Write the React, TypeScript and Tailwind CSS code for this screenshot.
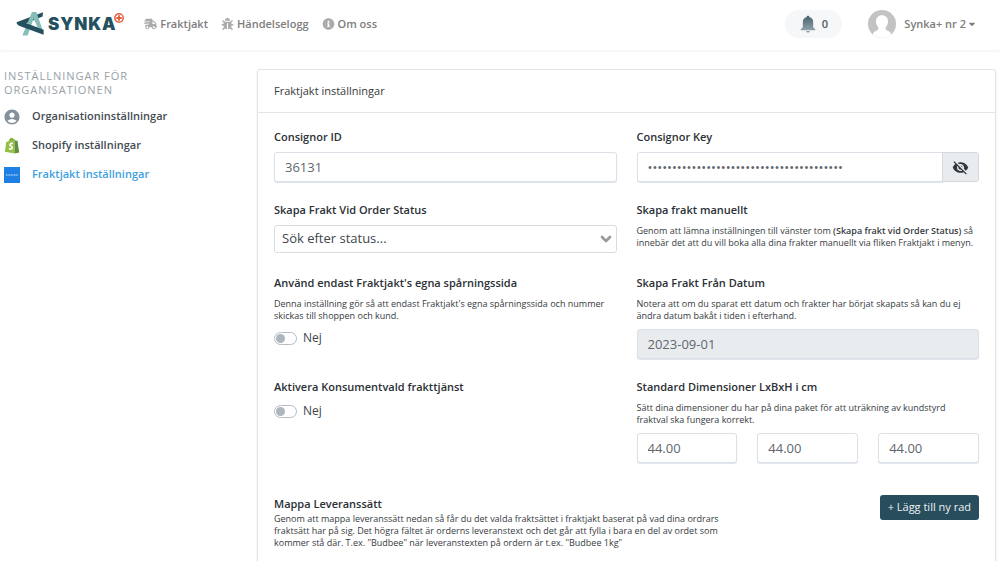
import { useState } from 'react'
import type { ReactNode } from 'react'
import { FaBug, FaCaretDown, FaInfoCircle, FaShippingFast } from 'react-icons/fa'
import { MdAccountCircle, MdVisibilityOff } from 'react-icons/md'
import { ChevronDown } from 'lucide-react'
import { clsx } from 'clsx'

const navItems = [
  { title: 'Fraktjakt', href: '#fraktjakt', icon: FaShippingFast },
  { title: 'Händelselogg', href: '#logg', icon: FaBug },
  { title: 'Om oss', href: '#om-oss', icon: FaInfoCircle }
]

const inputClass =
  'h-[30px] w-full min-w-0 rounded-[3px] border border-[#dce1e8] bg-white px-2.5 text-[13px] text-[#5f666d] shadow-[0_1px_1px_#dfe4ea] outline-none'

function LogoMark() {
  return (
    <svg viewBox="0 0 28 26" className="h-[26px] w-7" aria-hidden="true">
      <path d="M27 1.200 1.200 11c-.8.400-.8 1.500 0 2l3.400 1.600L26.600 5.600z" fill="#25505f" />
      <path d="M16 1h4.400L26.400 18.600l-4.400-1.200L17.600 7.400 11.600 24.600H6.400z" fill="#86bdb9" />
      <path d="M.900 12.800 9 11.800 27.600 18.800V23.800L3 14.800z" fill="#25505f" />
    </svg>
  )
}

function PlusBadge() {
  return (
    <svg viewBox="0 0 10 10" className="h-2.5 w-2.5" aria-hidden="true">
      <circle cx="5" cy="5" r="4.200" fill="#fff" stroke="#e0603f" strokeWidth="1.500" />
      <path d="M5 2.200v5.600M2.200 5h5.600" stroke="#e0603f" strokeWidth="1.900" />
    </svg>
  )
}

function BellIcon() {
  return (
    <svg viewBox="0 0 16 18" className="h-[18px] w-4" aria-hidden="true">
      <defs>
        <linearGradient id="bell" x1="0" y1="0" x2="0" y2="1">
          <stop offset="0" stopColor="#48616d" />
          <stop offset="1" stopColor="#8fa1aa" />
        </linearGradient>
      </defs>
      <path
        d="M8 .8c.8 0 1.300.5 1.300 1.300 2.500.6 3.900 2.500 3.900 5v5.200l2.100 2v.9H.7v-.9l2.100-2V7.100c0-2.500 1.400-4.400 3.900-5C6.700 1.300 7.200.8 8 .8z"
        fill="url(#bell)"
      />
      <path d="M6.200 15.900h3.600c-.1 1-.8 1.600-1.800 1.600s-1.700-.6-1.800-1.600z" fill="#8fa1aa" />
    </svg>
  )
}

function ShopifyIcon() {
  return (
    <svg viewBox="0 0 16 18" className="h-[17px] w-4" aria-hidden="true">
      <path d="M1.900 5.200 4.400 4.400C4.900 2.300 6.300.7 8 .7c.8 0 1.300.5 1.600 1.200l1.200.4.200 15.200L.4 15.700z" fill="#95bf47" />
      <path d="M10.800 2.600 12 3.900l1.800.2L15.600 16.500 11 17.500z" fill="#5e8e3e" />
      <path d="M5.600 4c.5-1.300 1.300-2.200 2.200-2.200.5 0 .7.6.8 1.400" fill="none" stroke="#5e8e3e" strokeWidth=".7" />
      <path
        d="M8.900 7.100c-1.500-.8-3.100-.3-3.100 1 0 1.600 2.500 1.700 2.500 3.400 0 1.400-1.900 1.800-3.500.6"
        fill="none"
        stroke="#fff"
        strokeWidth="1.700"
      />
    </svg>
  )
}

function FraktjaktIcon() {
  return (
    <svg viewBox="0 0 16 16" className="h-4 w-4" aria-hidden="true">
      <path d="M0 0h16v16H0z" fill="#1f7fe5" />
      <path d="M2 8h12" stroke="#9cc8f6" strokeWidth="1.400" strokeDasharray="1.100 .5" />
    </svg>
  )
}

function Avatar() {
  return (
    <svg viewBox="0 0 28 28" className="h-7 w-7" aria-hidden="true">
      <defs>
        <clipPath id="avatar">
          <circle cx="14" cy="14" r="14" />
        </clipPath>
      </defs>
      <g clipPath="url(#avatar)">
        <path d="M0 0h28v28H0z" fill="#c3c3c3" />
        <path
          d="M14 5.200c3.600 0 6 2.500 6 6 0 2.500-.9 4.600-2.300 5.900v1.600c0 .9.700 1.500 2 2 2.400.9 4 2.600 4.300 7.300H4c.3-4.700 1.900-6.400 4.300-7.300 1.300-.5 2-1.100 2-2v-1.600C8.900 15.800 8 13.700 8 11.200c0-3.500 2.400-6 6-6z"
          fill="#fff"
        />
      </g>
    </svg>
  )
}

const sideItems = [
  { title: 'Organisationinställningar', href: '#organisation', icon: <MdAccountCircle className="h-[18px] w-[18px] shrink-0 text-[#84919b]" /> },
  { title: 'Shopify inställningar', href: '#shopify', icon: <ShopifyIcon /> },
  { title: 'Fraktjakt inställningar', href: '#fraktjakt-installningar', icon: <FraktjaktIcon />, active: true }
]

function Label({ htmlFor, children }: { htmlFor?: string; children: ReactNode }) {
  const className = 'mb-1.5 block text-[11px] leading-[18px] font-semibold text-[#2b3035]'
  if (!htmlFor) return <h3 className={className}>{children}</h3>
  return <label htmlFor={htmlFor} className={className}>{children}</label>
}

function Help({ children }: { children: ReactNode }) {
  return <p className="pr-1 text-[9px] leading-3 text-[#363b40]">{children}</p>
}

function Toggle({ id }: { id: string }) {
  const [on, setOn] = useState(false)
  return (
    <div className="flex h-[18px] items-center gap-1.5">
      <span className="relative flex">
        <input
          id={id}
          type="checkbox"
          role="switch"
          checked={on}
          onChange={(e) => setOn(e.target.checked)}
          className="peer h-[13px] w-[23px] appearance-none rounded-full border border-[#b4bcc5] bg-white checked:bg-[#25505f]"
        />
        <span className="pointer-events-none absolute top-0.5 left-0.5 h-[9px] w-[9px] rounded-full bg-[#adb5bd] peer-checked:left-3" />
      </span>
      <span className="text-xs text-[#40464b]">{on ? 'Ja' : 'Nej'}</span>
    </div>
  )
}

function Navbar() {
  return (
    <header className="flex h-[51px] items-center justify-between border-b border-[#f4f4f4] bg-white pr-6 pb-0.5 pl-4 shadow-[0_1px_2px_#f8f8f8]">
      <div className="flex items-center">
        <a href="#start" className="flex items-center" aria-label="Synka+">
          <LogoMark />
          <span className="ml-1 font-[Inter,sans-serif] text-[17px] leading-6 font-black tracking-wider text-[#25505f]">SYNKA</span>
          <span className="-mt-3 -ml-0.5">
            <PlusBadge />
          </span>
        </a>
        <nav className="ml-5 flex gap-[13px]">
          {navItems.map((item) => {
            const Icon = item.icon
            return (
              <a key={item.href} href={item.href} className="flex items-center gap-[3px] text-[11px] font-semibold text-[#7d7d7d]">
                <Icon className="h-3 w-[13px] text-[#ababab]" />
                {item.title}
              </a>
            )
          })}
        </nav>
      </div>
      <div className="flex items-center gap-[26px]">
        <button type="button" className="flex h-7 w-[57px] items-center justify-center gap-1.5 rounded-full bg-[#f6f7f8] text-[11px] font-semibold text-[#4c5a63]">
          <BellIcon />0
        </button>
        <button type="button" className="flex items-center gap-2 text-[11px] font-semibold text-[#7d7d7d]">
          <Avatar />
          <span className="flex items-center gap-0.5">
            Synka+ nr 2
            <FaCaretDown className="h-2.5 w-2" />
          </span>
        </button>
      </div>
    </header>
  )
}

function Sidebar() {
  return (
    <aside className="w-[25%] shrink-0 pl-1">
      <h2 className="w-40 text-[11px] leading-[14px] tracking-[1px] text-[#98a1a8] uppercase">
        Inställningar för organisationen
      </h2>
      <nav className="mt-[5px]">
        {sideItems.map((item) => (
          <a
            key={item.href}
            href={item.href}
            className={clsx(
              'flex h-[29px] items-center gap-3 text-[11px] font-semibold',
              item.active ? 'text-[#3f9fde]' : 'text-[#434b52]'
            )}
          >
            <span className="flex w-4 justify-center">{item.icon}</span>
            {item.title}
          </a>
        ))}
      </nav>
    </aside>
  )
}

export default function App() {
  const [showKey, setShowKey] = useState(false)

  return (
    <div className="min-h-screen bg-white font-['Open_Sans',sans-serif]">
      <Navbar />
      <div className="flex items-start pt-[18px] pr-1">
        <Sidebar />
        <main className="ml-2 min-w-0 flex-1 rounded-[3px] border border-[#e4e4e4] shadow-[0_1px_3px_#ececec]">
          <h1 className="border-b border-[#e4e4e4] px-4 text-[11px] leading-[42px] text-[#363b40]">Fraktjakt inställningar</h1>
          <form className="px-4 pt-[15px] pb-8">
            <div className="grid grid-cols-2 gap-x-5 gap-y-[19px]">
              <div>
                <Label htmlFor="consignor-id">Consignor ID</Label>
                <input id="consignor-id" defaultValue="36131" className={inputClass} />
              </div>

              <div>
                <Label htmlFor="consignor-key">Consignor Key</Label>
                <div className="flex">
                  <input
                    id="consignor-key"
                    type={showKey ? 'text' : 'password'}
                    defaultValue="0123456789012345678901234567890123456789"
                    className={clsx(inputClass, 'rounded-r-none')}
                  />
                  <button
                    type="button"
                    aria-label="Visa nyckel"
                    onClick={() => setShowKey(!showKey)}
                    className="-ml-px flex h-[30px] w-[37px] shrink-0 items-center justify-center rounded-r-[3px] border border-[#d3d9df] bg-[#e9ecef] text-[#32373c]"
                  >
                    <MdVisibilityOff className="h-[17px] w-[17px]" />
                  </button>
                </div>
              </div>

              <div>
                <Label htmlFor="order-status">Skapa Frakt Vid Order Status</Label>
                <div className="relative mb-0.5">
                  <select
                    id="order-status"
                    className="block h-7 w-full appearance-none rounded-[3px] border border-[#d9dce0] bg-white px-[7px] text-[13px] text-[#40464b] outline-none"
                  >
                    <option>Sök efter status...</option>
                  </select>
                  <ChevronDown className="pointer-events-none absolute top-1.5 right-[3px] h-4 w-4 text-[#999]" strokeWidth={4} />
                </div>
              </div>

              <div>
                <Label>Skapa frakt manuellt</Label>
                <Help>
                  Genom att lämna inställningen till vänster tom{' '}
                  <strong className="font-semibold">(Skapa frakt vid Order Status)</strong> så innebär det att du vill
                  boka alla dina frakter manuellt via fliken Fraktjakt i menyn.
                </Help>
              </div>

              <div>
                <Label htmlFor="tracking">Använd endast Fraktjakt's egna spårningssida</Label>
                <Help>
                  Denna inställning gör så att endast Fraktjakt's egna spårningssida och nummer skickas till shoppen och
                  kund.
                </Help>
                <div className="mt-[7px]">
                  <Toggle id="tracking" />
                </div>
              </div>

              <div>
                <Label htmlFor="from-date">Skapa Frakt Från Datum</Label>
                <Help>
                  Notera att om du sparat ett datum och frakter har börjat skapats så kan du ej ändra datum bakåt i
                  tiden i efterhand.
                </Help>
                <input
                  id="from-date"
                  defaultValue="2023-09-01"
                  disabled
                  className={clsx(inputClass, 'mt-[7px] disabled:bg-[#e9ecef]')}
                />
              </div>

              <div>
                <Label htmlFor="consumer">Aktivera Konsumentvald frakttjänst</Label>
                <Toggle id="consumer" />
              </div>

              <div>
                <Label htmlFor="dim-l">Standard Dimensioner LxBxH i cm</Label>
                <Help>
                  Sätt dina dimensioner du har på dina paket för att uträkning av kundstyrd fraktval ska fungera
                  korrekt.
                </Help>
                <div className="mt-[7px] grid grid-cols-3 gap-5">
                  <input id="dim-l" aria-label="Längd" defaultValue="44.00" className={inputClass} />
                  <input aria-label="Bredd" defaultValue="44.00" className={inputClass} />
                  <input aria-label="Höjd" defaultValue="44.00" className={inputClass} />
                </div>
              </div>
            </div>

            <div className="mt-8 flex items-start justify-between">
              <div className="w-[450px]">
                <h3 className="text-[11px] leading-[18px] font-semibold text-[#2b3035]">Mappa Leveranssätt</h3>
                <Help>
                  Genom att mappa leveranssätt nedan så får du det valda fraktsättet i fraktjakt baserat på vad dina
                  ordrars fraktsätt har på sig. Det högra fältet är orderns leveranstext och det går att fylla i bara
                  en del av ordet som kommer stå där. T.ex. "Budbee" när leveranstexten på ordern är t.ex. "Budbee 1kg"
                </Help>
              </div>
              <button type="button" className="h-[25px] rounded-[3px] bg-[#284d5c] px-2 text-[11px] text-[#eef2f4]">
                + Lägg till ny rad
              </button>
            </div>
          </form>
        </main>
      </div>
    </div>
  )
}
